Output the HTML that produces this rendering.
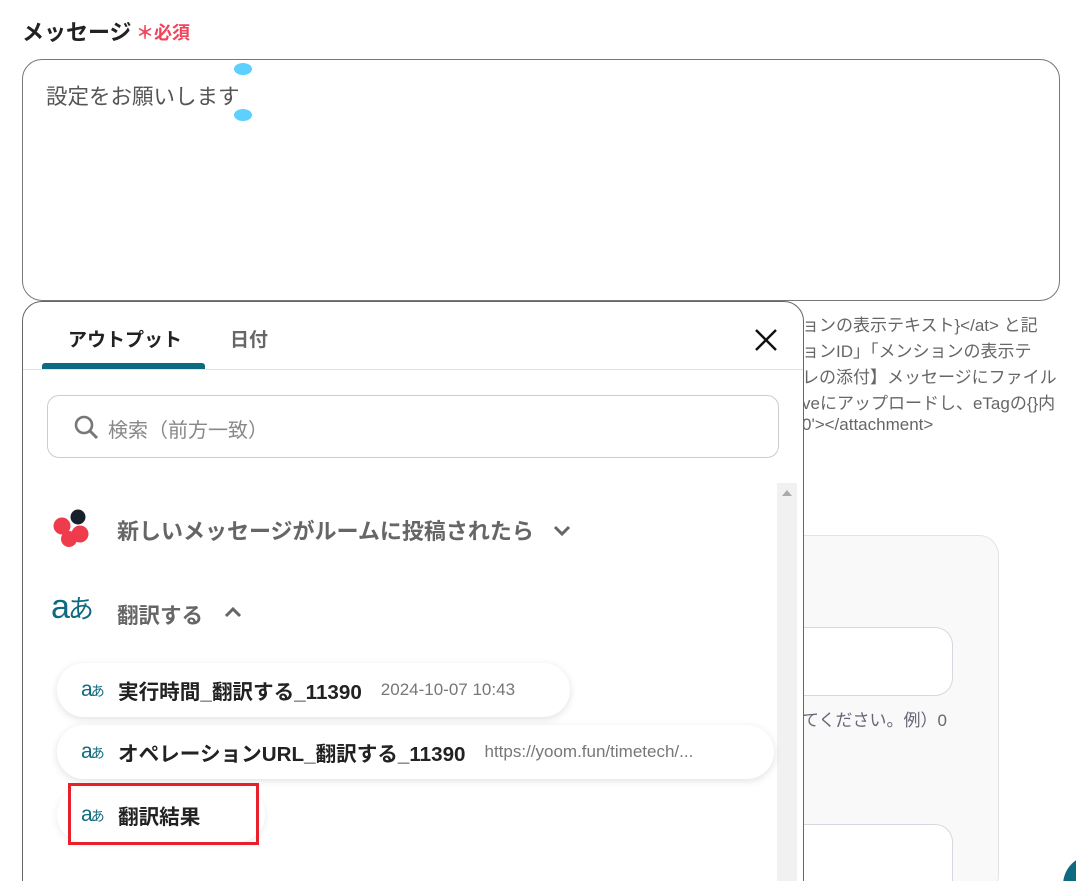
<!DOCTYPE html>
<html><head><meta charset="utf-8"><style>
*{box-sizing:border-box;margin:0;padding:0}
html,body{width:1076px;height:881px;overflow:hidden}
body{background:#fff;font-family:"Liberation Sans","Noto Sans CJK JP",sans-serif;position:relative;color:#222}
.a{position:absolute;white-space:nowrap}
.help{left:802px;font-size:17px;color:#666}
.pill{position:absolute;left:57px;height:54px;border-radius:27px;background:#fff;box-shadow:0 2px 8px rgba(0,0,0,.12);display:flex;align-items:center;padding-left:24px}
.pill .ic{color:#0e6a80;font-size:21px;width:37px;letter-spacing:-2px}
.pill .ic small{font-size:14px}
.pill b{font-size:20.6px;color:#222}
.pill span.g{font-size:17px;color:#777;margin-left:19px}
</style></head><body>
<div class="a" style="left:22px;top:15px;font-size:22px;font-weight:bold;color:#222">メッセージ</div>
<div class="a" style="left:136px;top:19px;font-size:18px;font-weight:bold;color:#f0445a">＊必須</div>
<div class="a" style="left:22px;top:59px;width:1038px;height:242px;border:1px solid #777;border-radius:20px"></div>
<div class="a" style="left:46px;top:80px;font-size:21.5px;color:#555">設定をお願いします</div>
<div class="a" style="left:234px;top:63px;width:18px;height:12px;border-radius:50%;background:#5cd0ff"></div>
<div class="a" style="left:234px;top:109px;width:18px;height:12px;border-radius:50%;background:#5cd0ff"></div>
<div class="a help" style="top:311px">ョンの表示テキスト}&lt;/at&gt; と記</div>
<div class="a help" style="top:337px">ョンID」「メンションの表示テ</div>
<div class="a help" style="top:363px">レの添付】メッセージにファイル</div>
<div class="a help" style="top:389px">veにアップロードし、eTagの{}内</div>
<div class="a help" style="top:415px">0'&gt;&lt;/attachment&gt;</div>
<div class="a" style="left:760px;top:535px;width:239px;height:360px;background:#f9f9fa;border:1px solid #e3e3e6;border-radius:20px"></div>
<div class="a" style="left:760px;top:627px;width:193px;height:69px;background:#fff;border:1px solid #d5d8de;border-radius:18px"></div>
<div class="a help" style="top:706px;color:#667">てください。例）0</div>
<div class="a" style="left:760px;top:824px;width:193px;height:80px;background:#fff;border:1px solid #d5d8de;border-radius:18px"></div>
<div class="a" style="left:1063px;top:855px;width:60px;height:60px;border-radius:50%;background:#0e6a80"></div>

<div class="a" style="left:22px;top:301px;width:782px;height:600px;background:#fff;border:1px solid #666;border-radius:20px"></div>
<div class="a" style="left:68px;top:325px;font-size:19px;font-weight:bold;color:#222">アウトプット</div>
<div class="a" style="left:230px;top:325px;font-size:19px;font-weight:bold;color:#666">日付</div>
<div class="a" style="left:42px;top:363px;width:163px;height:6px;background:#0e6a80;border-radius:3px 3px 0 0"></div>
<div class="a" style="left:23px;top:369px;width:780px;height:1px;background:#e2e2e2"></div>
<svg class="a" style="left:754px;top:328px" width="24" height="24" viewBox="0 0 24 24"><path d="M2 2L22 22M22 2L2 22" stroke="#111" stroke-width="2.4"/></svg>
<div class="a" style="left:47px;top:395px;width:732px;height:63px;border:1px solid #ccc;border-radius:12px"></div>
<svg class="a" style="left:73px;top:414px" width="26" height="26" viewBox="0 0 26 26"><circle cx="11" cy="11" r="8" fill="none" stroke="#777" stroke-width="2.6"/><path d="M17 17L24 24" stroke="#777" stroke-width="3"/></svg>
<div class="a" style="left:108px;top:414px;font-size:20px;color:#888">検索（前方一致）</div>
<div class="a" style="left:777px;top:483px;width:20px;height:400px;background:#f1f1f1"></div>
<div class="a" style="left:782px;top:490px;width:0;height:0;border-left:5px solid transparent;border-right:5px solid transparent;border-bottom:6px solid #aaa"></div>
<svg class="a" style="left:52px;top:508px" width="40" height="40" viewBox="0 0 40 40"><circle cx="10" cy="18" r="8.5" fill="#ef3b4c"/><circle cx="28" cy="26" r="8.5" fill="#ef3b4c"/><circle cx="17" cy="31" r="8" fill="#ef3b4c"/><circle cx="26" cy="9" r="7.5" fill="#18202e"/></svg>
<div class="a" style="left:117px;top:514px;font-size:22px;font-weight:bold;color:#666">新しいメッセージがルームに投稿されたら</div>
<svg class="a" style="left:553px;top:524px" width="18" height="14" viewBox="0 0 18 14"><path d="M2 3L9 10L16 3" fill="none" stroke="#666" stroke-width="3"/></svg>
<div class="a" style="left:51px;top:588px;font-size:34px;color:#0e6a80;letter-spacing:-2px">a<span style="font-size:26px">あ</span></div>
<div class="a" style="left:117px;top:599px;font-size:21.5px;font-weight:bold;color:#666">翻訳する</div>
<svg class="a" style="left:224px;top:605px" width="18" height="14" viewBox="0 0 18 14"><path d="M2 11L9 4L16 11" fill="none" stroke="#666" stroke-width="3"/></svg>
<div class="pill" style="top:663px;width:513px"><span class="ic">a<small>あ</small></span><b>実行時間_翻訳する_11390</b><span class="g">2024-10-07 10:43</span></div>
<div class="pill" style="top:725px;width:717px"><span class="ic">a<small>あ</small></span><b>オペレーションURL_翻訳する_11390</b><span class="g">https://yoom.fun/timetech/...</span></div>
<div class="pill" style="top:788px;width:208px;box-shadow:0 2px 8px rgba(0,0,0,.08)"><span class="ic">a<small>あ</small></span><b>翻訳結果</b></div>
<div class="a" style="left:68px;top:783px;width:191px;height:62px;border:3px solid #e8202a"></div>
</body></html>
